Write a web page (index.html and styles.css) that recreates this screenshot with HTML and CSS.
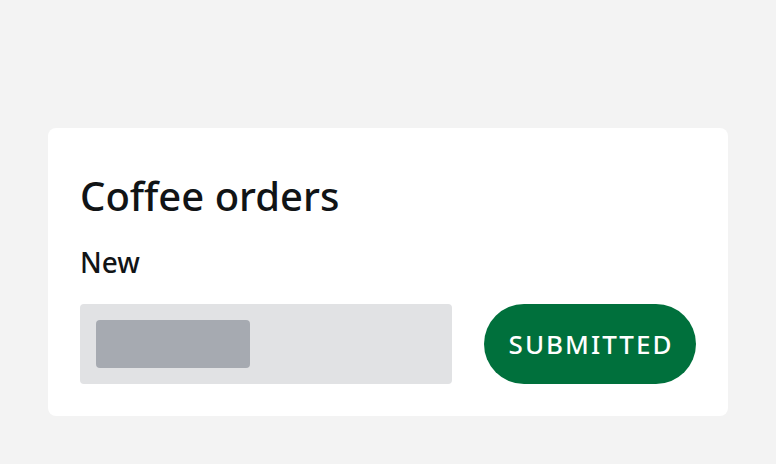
FILE: index.html
```html
<!DOCTYPE html>
<html lang="en">
<head>
<meta charset="utf-8">
<title>Coffee orders</title>
<link rel="stylesheet" href="styles.css">
</head>
<body>
<main class="page">
  <section class="card">
    <h1 class="title">Coffee orders</h1>
    <h2 class="label">New</h2>
    <div class="row">
      <div class="field"><div class="placeholder"></div></div>
      <button class="status" type="button">SUBMITTED</button>
    </div>
  </section>
</main>
</body>
</html>
```

FILE: styles.css
```css
* { box-sizing: border-box; }
html, body { margin: 0; padding: 0; }
body {
  background: #f3f3f3;
  font-family: "Noto Sans", "Open Sans", sans-serif;
  color: #111416;
  width: 776px;
  height: 464px;
  overflow: hidden;
}
.page { padding: 128px 48px 0 48px; }
.card {
  background: #ffffff;
  border-radius: 8px;
  height: 288px;
  padding: 40px 32px 32px 32px;
}
.title {
  margin: 0;
  font-size: 40px;
  font-weight: 500;
  line-height: 56px;
}
.label {
  margin: 20px 0 0 0;
  font-size: 28px;
  font-weight: 500;
  line-height: 36px;
}
.row {
  margin-top: 24px;
  display: flex;
  gap: 32px;
  align-items: center;
}
.field {
  width: 372px;
  height: 80px;
  background: #e1e2e4;
  border-radius: 4px;
  padding: 16px;
}
.placeholder {
  width: 154px;
  height: 48px;
  background: #a6aab1;
  border-radius: 4px;
}
.status {
  width: 212px;
  height: 80px;
  border: 0;
  border-radius: 40px;
  background: #00703c;
  color: #ffffff;
  font-family: "Noto Sans", "Open Sans", sans-serif;
  font-size: 26px;
  font-weight: 500;
  letter-spacing: 2px;
  padding: 0 0 0 2px;
}
```
